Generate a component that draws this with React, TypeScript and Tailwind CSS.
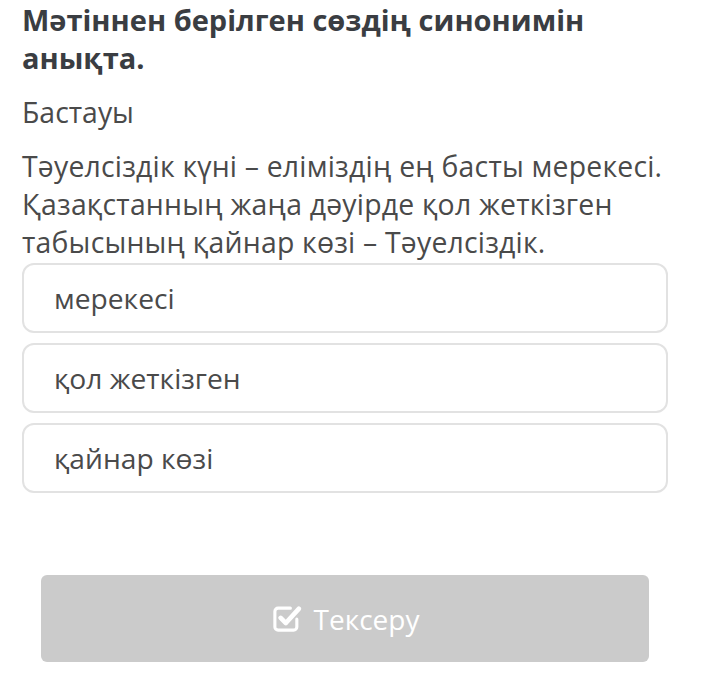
const options = ["мерекесі", "қол жеткізген", "қайнар көзі"];

function CheckIcon() {
  return (
    <svg width="31" height="31" viewBox="0 0 24 24" fill="none" className="shrink-0">
      <path
        d="M20 12.5V18.5a2.5 2.5 0 0 1-2.5 2.5h-12A2.5 2.5 0 0 1 3 18.5v-12A2.5 2.5 0 0 1 5.5 4H15"
        stroke="white"
        strokeWidth="2.4"
        strokeLinecap="round"
      />
      <path
        d="M7.5 11.5l4 4L21.5 4.5"
        stroke="white"
        strokeWidth="3.6"
        strokeLinecap="round"
        strokeLinejoin="round"
      />
    </svg>
  );
}

export default function App() {
  return (
    <div className="min-h-[690px] w-[705px] bg-white font-['Open_Sans',sans-serif]">
      <div className="px-[22px] pr-[37px]">
        {/* Question header */}
        <h1 className="text-[29px] font-bold leading-[38px] text-[#3a3d42] pt-px">
          Мәтіннен берілген сөздің синонимін анықта.
        </h1>
        <p className="mt-4 text-[28.4px] leading-[38px] text-[#4a4a4a]">Бастауы</p>
        <p className="mt-4 text-[28.4px] leading-[38px] text-[#4a4a4a] tracking-[0.2px]">
          Тәуелсіздік күні – еліміздің ең басты мерекесі. Қазақстанның жаңа дәуірде қол жеткізген
          табысының қайнар көзі – Тәуелсіздік.
        </p>

        {/* Options */}
        <div className="mt-[2px] flex flex-col gap-[10px]">
          {options.map((o) => (
            <div
              key={o}
              className="h-[70px] flex items-center rounded-xl border-2 border-[#e2e2e2] pl-[30px] text-[28.2px] text-[#4a4a4a]"
            >
              {o}
            </div>
          ))}
        </div>

        {/* Check button */}
        <div className="mx-[19px] mt-[82px] h-[87px] rounded-md bg-[#cbcbcb] flex items-center justify-center gap-3 text-white text-[28px]">
          <CheckIcon />
          <span>Тексеру</span>
        </div>
      </div>
    </div>
  );
}
